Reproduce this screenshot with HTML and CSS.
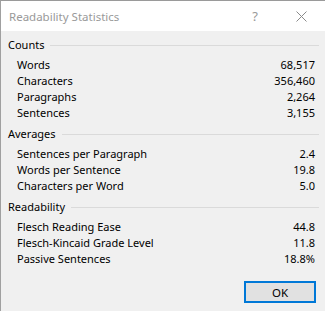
FILE: index.html
```html
<!DOCTYPE html>
<html lang="en">

<head>
    <meta charset="UTF-8" />
    <meta name="viewport" content="width=device-width, initial-scale=1.0" />
    <title>Readability Statistics</title>
    <link rel="stylesheet" href="styles.css">
</head>

<body>
    <div class="dialog">
        <div class="titlebar">
            <span class="title">Readability Statistics</span>
            <span class="help">?</span>
            <svg class="close" width="11" height="11" viewBox="0 0 11 11">
                <path d="M0.5 0.5 L10.5 10.5 M10.5 0.5 L0.5 10.5" stroke="#8a8a8a" stroke-width="1" fill="none" />
            </svg>
        </div>

        <div class="content">
            <div class="group first">
                <div class="group-head"><span>Counts</span><i class="rule"></i></div>
                <ul class="rows">
                    <li><span>Words</span><span>68,517</span></li>
                    <li><span>Characters</span><span>356,460</span></li>
                    <li><span>Paragraphs</span><span>2,264</span></li>
                    <li><span>Sentences</span><span>3,155</span></li>
                </ul>
            </div>

            <div class="group">
                <div class="group-head"><span>Averages</span><i class="rule"></i></div>
                <ul class="rows">
                    <li><span>Sentences per Paragraph</span><span>2.4</span></li>
                    <li><span>Words per Sentence</span><span>19.8</span></li>
                    <li><span>Characters per Word</span><span>5.0</span></li>
                </ul>
            </div>

            <div class="group">
                <div class="group-head"><span>Readability</span><i class="rule"></i></div>
                <ul class="rows">
                    <li><span>Flesch Reading Ease</span><span>44.8</span></li>
                    <li><span>Flesch-Kincaid Grade Level</span><span>11.8</span></li>
                    <li><span>Passive Sentences</span><span>18.8%</span></li>
                </ul>
            </div>

            <div class="actions">
                <button class="ok">OK</button>
            </div>
        </div>
    </div>
</body>

</html>
```

FILE: styles.css
```css
* {
    margin: 0;
    padding: 0;
    box-sizing: border-box;
}

ul {
    list-style: none;
}

html,
body {
    width: 325px;
    height: 311px;
    overflow: hidden;
}

body {
    font-family: "Noto Sans", "Open Sans", sans-serif;
    font-size: 11px;
    color: #000;
    background: #f0f0f0;
}

.dialog {
    height: 311px;
    border-left: 1px solid #a0a0a0;
    border-top: 1px solid #9a9a9a;
    display: flex;
    flex-direction: column;
}

/* 
    标题栏
*/
.titlebar {
    height: 30px;
    background: #fff;
    display: flex;
    align-items: center;
    padding-left: 8px;
    color: #999;
    font-size: 11.5px;
}

.title {
    flex: 1;
}

.help {
    font-size: 13px;
    color: #999;
    margin-right: 38px;
}

.close {
    margin-right: 18px;
}

.content {
    flex: 1;
}

.group {
    margin-top: 5px;
}

.group.first {
    margin-top: 6px;
}

.group-head {
    height: 16px;
    line-height: 16px;
    display: flex;
    align-items: center;
    gap: 6px;
    padding-left: 7px;
    padding-right: 6px;
}

.rule {
    flex: 1;
    height: 1px;
    background: #dadada;
}

.rows {
    margin-top: 4px;
}

.rows li {
    height: 16px;
    line-height: 16px;
    display: flex;
    justify-content: space-between;
    padding-left: 16px;
    padding-right: 10px;
}

.actions {
    display: flex;
    justify-content: flex-end;
    padding-right: 9px;
    margin-top: 14px;
}

.ok {
    width: 72px;
    height: 22px;
    border: 2px solid #0078d7;
    background: #e1e1e1;
    font-family: inherit;
    font-size: 11.5px;
    color: #000;
}
```
